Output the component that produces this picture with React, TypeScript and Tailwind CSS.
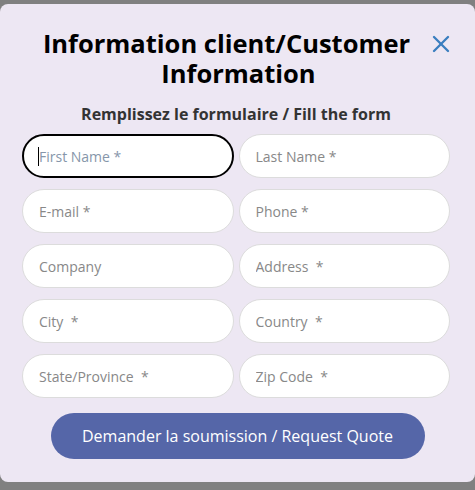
import { X } from "lucide-react";

const fields = [
  "First Name *",
  "Last Name *",
  "E-mail *",
  "Phone *",
  "Company",
  "Address  *",
  "City  *",
  "Country  *",
  "State/Province  *",
  "Zip Code  *",
];

export default function App() {
  return (
    <div
      className="w-[475px] h-[490px] bg-[#808080] pt-[4px]"
      style={{ fontFamily: '"Open Sans", "Noto Sans", sans-serif' }}
    >
      <div className="relative h-[478px] bg-[#ede7f3] rounded-lg pl-[22px] pr-[25px] pt-[24px]">
        <button className="absolute right-[20px] top-[26px] text-[#3a7ebf]">
          <X size={28} strokeWidth={2} />
        </button>
        <h2 className="text-center text-[25.5px] font-bold leading-[30px] text-black">
          <span className="block pr-[19px]">Information client/Customer</span>
          <span className="block pl-[5px]">Information</span>
        </h2>
        <p className="mt-[14px] text-center text-[16px] font-bold text-[#333]">
          Remplissez le formulaire / Fill the form
        </p>
        <div className="mt-[8px] grid grid-cols-2 gap-x-[5px] gap-y-[11px]">
          {fields.map((f, i) => (
            <div key={f} className="relative">
              <input
                placeholder={f}
                className={
                  i === 0
                    ? "w-full h-[44px] rounded-full bg-white border-2 border-black px-[15px] text-[14px] outline-none placeholder:text-[#8696aa]"
                    : "w-full h-[44px] rounded-full bg-white border border-[#dcdcdc] px-[16px] text-[14px] outline-none placeholder:text-[#888]"
                }
              />
              {i === 0 && (
                <span className="absolute left-[16px] top-[13px] w-px h-[19px] bg-black" />
              )}
            </div>
          ))}
        </div>
        <div className="mt-[15px] flex justify-center pl-[4px]">
          <button className="w-[374px] h-[46px] rounded-full bg-[#5566a8] text-white text-[16px] pr-[1px]">
            Demander la soumission / Request Quote
          </button>
        </div>
      </div>
    </div>
  );
}
